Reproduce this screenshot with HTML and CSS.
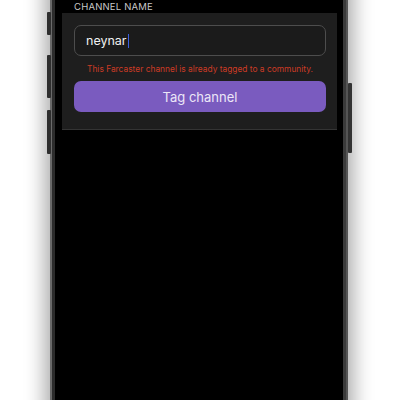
FILE: index.html
```html
<!DOCTYPE html>
<html>
<head>
<meta charset="utf-8">
<link rel="stylesheet" href="styles.css">
</head>
<body>
<div class="stage">
  <div class="phone">
    <div class="btn-side btn-l1"></div>
    <div class="btn-side btn-l2"></div>
    <div class="btn-side btn-l3"></div>
    <div class="btn-side btn-r1"></div>
    <div class="screen">
      <div class="label">CHANNEL NAME</div>
      <div class="card">
        <div class="input"><span class="value">neynar</span><span class="caret"></span></div>
        <div class="error">This Farcaster channel is already tagged to a community.</div>
        <div class="button">Tag channel</div>
      </div>
    </div>
  </div>
</div>
</body>
</html>
```
FILE: styles.css
```css
html, body { margin: 0; padding: 0; background: #fff; }
.stage {
  width: 400px; height: 400px; overflow: hidden; background: #fff;
  font-family: Inter, "Noto Sans", sans-serif;
}
.phone {
  position: relative;
  box-sizing: border-box;
  margin-left: 50px;
  margin-top: -20px;
  width: 298px;
  height: 440px;
  background: #000;
  border-left: 2px solid #6a6a6a;
  border-right: 2px solid #555;
  padding: 0 3px;
  box-shadow: inset 3px 0 0 #2c2c2c, inset -3px 0 0 #3a3a3a, 0 0 18px 6px rgba(0,0,0,0.32);
}
.btn-side { position: absolute; width: 4px; background: #2e2e2e; border-radius: 1px; }
.btn-l1 { left: -5px; top: 32px; height: 23px; }
.btn-l2 { left: -5px; top: 75px; height: 43px; }
.btn-l3 { left: -5px; top: 130px; height: 44px; }
.btn-r1 { right: -6px; top: 103px; height: 70px; background: #333; }
.screen {
  height: 100%;
  padding-top: 20px;
  background: #000;
}
.label {
  padding-left: 19px;
  font-size: 9.5px;
  line-height: 13px;
  letter-spacing: 0.2px;
  color: #c8c8c8;
}
.card {
  margin: 0 6px 0 7px;
  background: #1e1e1e;
  border-bottom: 1px solid #343434;
  padding: 12px 11px 17px 12px;
}
.input {
  box-sizing: border-box;
  height: 31px;
  border: 1px solid #4d4d4d;
  border-radius: 7px;
  background: #1b1b1b;
  display: flex;
  align-items: center;
  padding-left: 11px;
}
.value { color: #f0f0f0; font-size: 12.5px; }
.caret { width: 1.5px; height: 14px; background: #3b5fe0; margin-left: 1px; }
.error {
  text-align: center;
  color: #cc3b25;
  font-size: 8.4px;
  line-height: 10px;
  margin: 8px 0 7px;
}
.button {
  height: 31px;
  border-radius: 7px;
  background: #7a5bbf;
  color: #ece6f7;
  font-size: 13px;
  display: flex;
  align-items: center;
  justify-content: center;
}
```
